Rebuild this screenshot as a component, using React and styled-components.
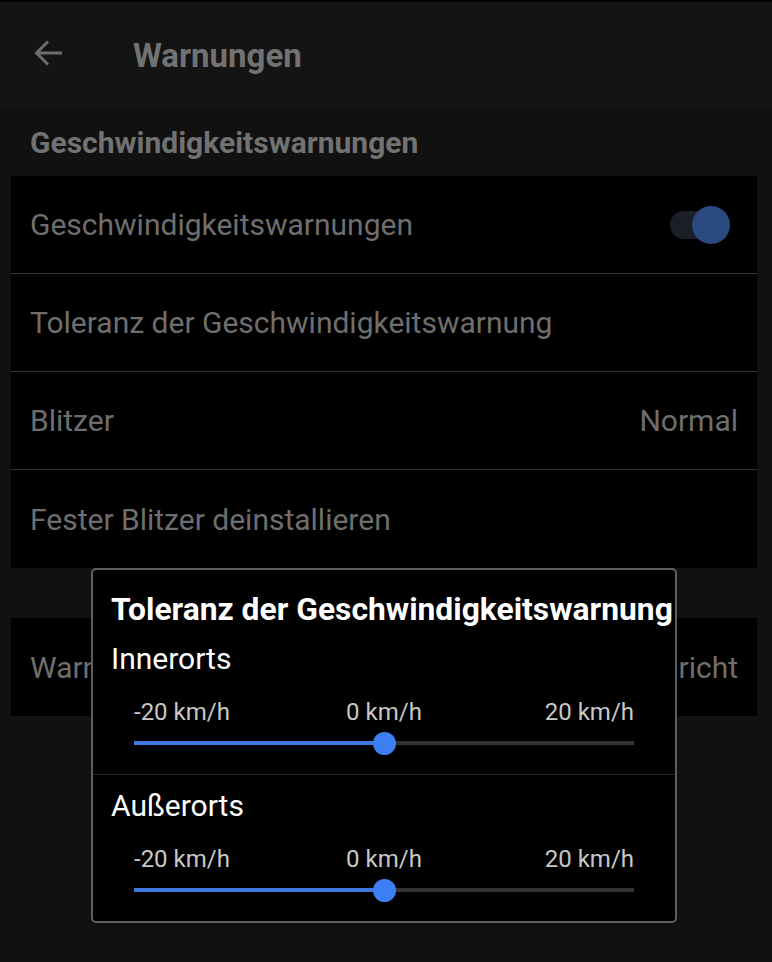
import styled, { createGlobalStyle } from 'styled-components';

const GlobalStyle = createGlobalStyle`
  body {
    margin: 0;
    background: #111111;
    font-family: Roboto, "Noto Sans", sans-serif;
  }
`;

export default function App() {
  return (
    <Page>
      <GlobalStyle />
      <Header>
        <BackButton aria-label="Zurück">
          <svg width="30" height="30" viewBox="0 0 30 30" fill="none">
            <path
              d="M28 15H3M14 3.5L2.5 15L14 26.5"
              stroke="#6c6c6c"
              strokeWidth="3"
            />
          </svg>
        </BackButton>
        <HeaderTitle>Warnungen</HeaderTitle>
      </Header>

      <SectionTitle>Geschwindigkeitswarnungen</SectionTitle>
      <Card>
        <Row>
          <RowLabel>Geschwindigkeitswarnungen</RowLabel>
          <Toggle $on>
            <ToggleThumb />
          </Toggle>
        </Row>
        <Row>
          <RowLabel>Toleranz der Geschwindigkeitswarnung</RowLabel>
        </Row>
        <Row>
          <RowLabel>Blitzer</RowLabel>
          <RowValue>Normal</RowValue>
        </Row>
        <Row>
          <RowLabel>Fester Blitzer deinstallieren</RowLabel>
        </Row>
      </Card>

      <Card $top={50}>
        <Row>
          <RowLabel>Warnungen im Hintergrund</RowLabel>
          <RowValue>Nachricht</RowValue>
        </Row>
      </Card>

      <Dialog>
        <DialogTitle>Toleranz der Geschwindigkeitswarnung</DialogTitle>
        <SliderSection title="Innerorts" value={0} />
        <SliderSection title="Außerorts" value={0} last />
      </Dialog>
    </Page>
  );
}

function SliderSection({ title, value, last }) {
  const pct = ((value + 20) / 40) * 100;
  return (
    <Section $last={last}>
      <SectionHeading>{title}</SectionHeading>
      <Scale>
        <ScaleLabel $align="start">-20 km/h</ScaleLabel>
        <ScaleLabel $align="center">0 km/h</ScaleLabel>
        <ScaleLabel $align="end">20 km/h</ScaleLabel>
      </Scale>
      <Slider>
        <Track />
        <TrackFill style={{ width: `${pct}%` }} />
        <Thumb style={{ left: `${pct}%` }} />
      </Slider>
    </Section>
  );
}

const Page = styled.div`
  position: relative;
  min-height: 962px;
  background: #111111;
  border-top: 2px solid #050505;
  box-sizing: border-box;
`;

const Header = styled.header`
  height: 106px;
  display: flex;
  align-items: center;
  background: #141414;
`;

const BackButton = styled.button`
  width: 30px;
  height: 30px;
  margin-left: 34px;
  margin-right: 69px;
  margin-top: -4px;
  padding: 0;
  border: none;
  background: none;
  display: flex;
`;

const HeaderTitle = styled.h1`
  margin: 0;
  font-size: 33px;
  font-weight: 700;
  color: #727272;
`;

const SectionTitle = styled.h2`
  margin: 0;
  padding: 17px 30px 0;
  height: 51px;
  line-height: 36px;
  font-size: 30px;
  font-weight: 700;
  color: #727272;
  white-space: nowrap;
`;

const Card = styled.div`
  margin: ${(p) => p.$top || 0}px 15px 0 11px;
  background: #000;
  display: flex;
  flex-direction: column;
`;

const Row = styled.div`
  height: 97px;
  padding: 0 19px;
  display: flex;
  align-items: center;
  justify-content: space-between;
  border-bottom: 1px solid #353535;
  white-space: nowrap;
  &:last-child {
    height: 98px;
    border-bottom: none;
  }
`;

const RowLabel = styled.span`
  font-size: 30px;
  color: #6e6e6e;
`;

const RowValue = styled.span`
  font-size: 30px;
  color: #6e6e6e;
`;

const Toggle = styled.div`
  position: relative;
  width: 44px;
  height: 28px;
  margin-right: 24px;
  border-radius: 14px;
  background: ${(p) => (p.$on ? '#1a1e27' : '#2a2a2a')};
`;

const ToggleThumb = styled.div`
  position: absolute;
  top: -5px;
  right: -16px;
  width: 38px;
  height: 38px;
  border-radius: 50%;
  background: #2a4a80;
`;

const Dialog = styled.div`
  position: absolute;
  left: 91px;
  top: 566px;
  width: 586px;
  box-sizing: border-box;
  background: #000;
  border: 2px solid #5e5e5e;
  border-radius: 5px;
  padding-top: 22px;
`;

const DialogTitle = styled.h3`
  margin: 0 0 2px;
  padding-left: 18px;
  line-height: 34px;
  font-size: 31.8px;
  font-weight: 700;
  color: #ffffff;
  white-space: nowrap;
`;

const Section = styled.div`
  padding: 15px 41px 20px;
  border-bottom: ${(p) => (p.$last ? 'none' : '1px solid #262626')};
`;

const SectionHeading = styled.div`
  margin-left: -23px;
  line-height: 32px;
  font-size: 30px;
  color: #ffffff;
`;

const Scale = styled.div`
  margin-top: 24px;
  display: grid;
  grid-template-columns: 1fr auto 1fr;
  line-height: 26px;
`;

const ScaleLabel = styled.span`
  justify-self: ${(p) => p.$align};
  font-size: 24px;
  color: #c8c8c8;
`;

const Slider = styled.div`
  position: relative;
  height: 22px;
  margin-top: 7px;
`;

const Track = styled.div`
  position: absolute;
  left: 0;
  right: 0;
  top: 9px;
  height: 4px;
  background: #333333;
`;

const TrackFill = styled.div`
  position: absolute;
  left: 0;
  top: 9px;
  height: 4px;
  background: #3f78e0;
`;

const Thumb = styled.div`
  position: absolute;
  top: 0;
  width: 23px;
  height: 23px;
  margin-left: -11px;
  border-radius: 50%;
  background: #3d7ef2;
`;
